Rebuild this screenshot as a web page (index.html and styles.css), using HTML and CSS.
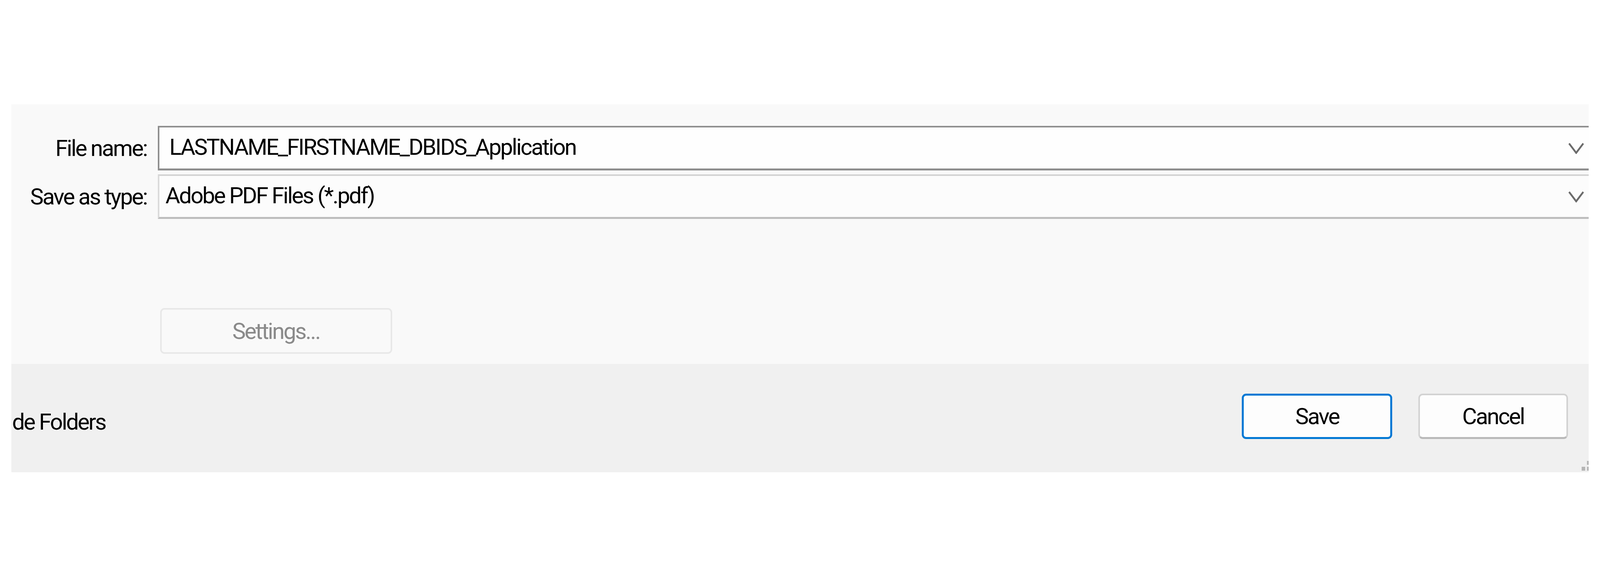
FILE: index.html
```html
<!DOCTYPE html>
<html lang="en">
<head>
<meta charset="utf-8">
<title>Save As</title>
<link rel="stylesheet" href="styles.css">
</head>
<body>
<div class="clip">
  <div class="dialog">
    <div class="fields">
      <label class="label">File name:</label>
      <div class="combo combo-edit">
        <span class="value">LASTNAME_FIRSTNAME_DBIDS_Application</span>
        <svg class="chev" viewBox="0 0 44 30" preserveAspectRatio="none"><polyline points="2,3 22,27 42,3" fill="none" stroke="#6b6b6b" stroke-width="5"/></svg>
      </div>
      <label class="label">Save as type:</label>
      <div class="combo combo-list">
        <span class="value">Adobe PDF Files (*.pdf)</span>
        <svg class="chev" viewBox="0 0 44 30" preserveAspectRatio="none"><polyline points="2,3 22,27 42,3" fill="none" stroke="#6b6b6b" stroke-width="5"/></svg>
      </div>
      <div class="settings-cell">
        <button class="btn btn-disabled" disabled>Settings...</button>
      </div>
    </div>
    <div class="footer">
      <span class="hide-folders">de Folders</span>
      <div class="actions">
        <button class="btn btn-primary">Save</button>
        <button class="btn btn-secondary">Cancel</button>
      </div>
    </div>
    <svg class="grip" viewBox="0 0 40 40" preserveAspectRatio="none">
      <rect x="0" y="30" width="10" height="10" fill="#b5b5b5"/>
      <rect x="15" y="30" width="10" height="10" fill="#b5b5b5"/>
      <rect x="30" y="30" width="10" height="10" fill="#b5b5b5"/>
      <rect x="15" y="15" width="10" height="10" fill="#b5b5b5"/>
      <rect x="30" y="15" width="10" height="10" fill="#b5b5b5"/>
      <rect x="30" y="0" width="10" height="10" fill="#b5b5b5"/>
    </svg>
  </div>
</div>
</body>
</html>
```

FILE: styles.css
```css
:root {
  --u: calc(100vw / 4500);
}

html, body {
  margin: 0;
  padding: 0;
  background: #ffffff;
}

body {
  font-family: Roboto, "Noto Sans", "Liberation Sans", sans-serif;
  font-size: 58px;
  letter-spacing: calc(31.75 * var(--u) - 31.94px);
  color: #000000;
}

.clip {
  margin: 267px 0 0 calc(32 * var(--u));
  width: calc(4436 * var(--u));
  overflow: hidden;
}

.dialog {
  position: relative;
  width: calc(4463 * var(--u));
}

.fields {
  background: #f9f9f9;
  display: grid;
  grid-template-columns: calc(381 * var(--u)) 1fr;
  column-gap: calc(31 * var(--u));
  row-gap: 10px;
  padding: 55px calc(15 * var(--u)) 26px 0;
}

.label {
  display: flex;
  align-items: center;
  justify-content: flex-end;
  height: 114px;
  white-space: nowrap;
}

.combo {
  box-sizing: border-box;
  height: 114px;
  display: flex;
  align-items: center;
  padding-right: calc(21 * var(--u));
  padding-bottom: 6px;
}

.combo-edit {
  background: #fefefe;
  border: 4px solid #8e8e8e;
  border-bottom-width: 5px;
  padding-left: calc(28 * var(--u));
}

.combo-list {
  background: #fcfcfc;
  border: 4px solid #d3d3d3;
  border-left-color: #dadada;
  border-bottom: 5px solid #bdbdbd;
  padding-left: calc(17 * var(--u));
}

.value {
  flex: 1;
  white-space: nowrap;
}

.chev {
  flex: none;
  display: block;
  width: calc(44 * var(--u));
  height: 30px;
  margin-top: 6px;
}

.settings-cell {
  grid-column: 2;
  margin-top: 218px;
  padding-left: calc(6 * var(--u));
}

.btn {
  box-sizing: border-box;
  font: inherit;
  letter-spacing: inherit;
  height: 116px;
  border-radius: 11px;
  background: #fdfdfd;
  color: #000000;
  padding: 0;
  margin: 0;
  display: flex;
  align-items: center;
  justify-content: center;
}

.btn-disabled {
  width: calc(653 * var(--u));
  height: 117px;
  background: #f9f9f9;
  border: 4px solid #e8e8e8;
  color: #8a8a8a;
}

.footer {
  background: #f0f0f0;
  height: 277px;
  box-sizing: border-box;
  display: flex;
  align-items: flex-start;
  padding: 76px calc(85 * var(--u)) 0 calc(2 * var(--u));
}

.hide-folders {
  margin-top: 38px;
  white-space: nowrap;
}

.actions {
  margin-left: auto;
  display: flex;
  gap: calc(73 * var(--u));
}

.btn-primary {
  width: calc(423 * var(--u));
  border: 5px solid #0078d4;
}

.btn-secondary {
  width: calc(421 * var(--u));
  border: 4px solid #d2d2d2;
  border-bottom: 5px solid #b9b9b9;
}

.grip {
  position: absolute;
  right: calc(7 * var(--u));
  bottom: 4px;
  width: calc(40 * var(--u));
  height: 40px;
  display: block;
}
```
